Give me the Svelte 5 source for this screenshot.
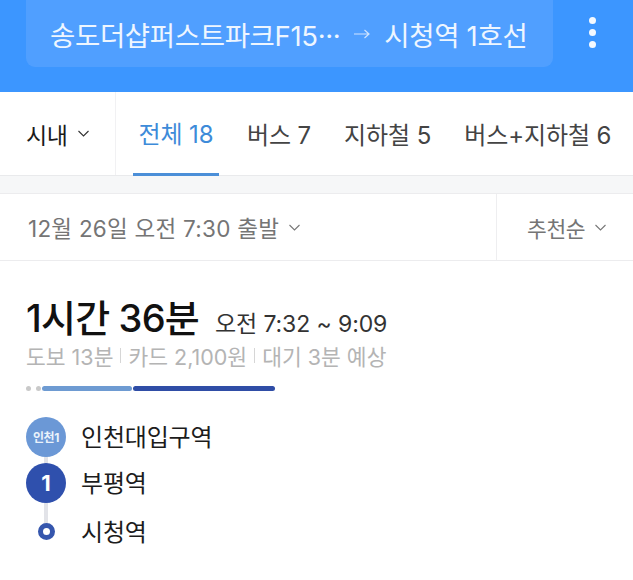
<script>
  const tabs = [
    { label: "전체 18", active: true },
    { label: "버스 7" },
    { label: "지하철 5" },
    { label: "버스+지하철 6" }
  ];
  const stops = [
    { name: "인천대입구역", badge: "인천1", kind: "line1" },
    { name: "부평역", badge: "1", kind: "line2" },
    { name: "시청역", badge: "", kind: "end" }
  ];
</script>

<div class="page">
  <header class="top">
    <div class="route">
      <span class="from">송도더샵퍼스트파크F15···</span>
      <svg class="arrow" width="18" height="12" viewBox="0 0 18 12"><path d="M1 6h15M11.5 2l4.5 4-4.5 4" fill="none" stroke="#cfe4ff" stroke-width="1.2"/></svg>
      <span>시청역 1호선</span>
    </div>
    <div class="more"><i></i><i></i><i></i></div>
  </header>

  <nav class="tabs">
    <div class="scope">
      <span>시내</span>
      <svg class="chev" width="13" height="7" viewBox="0 0 12 7"><path d="M1 1l5 5 5-5" fill="none" stroke="#333" stroke-width="1.1"/></svg>
    </div>
    <div class="tablist">
      {#each tabs as tab}
        <div class="tab" class:active={tab.active}>{tab.label}</div>
      {/each}
    </div>
  </nav>

  <div class="gap"></div>

  <div class="filter">
    <div class="when">
      <span>12월 26일 오전 7:30 출발</span>
      <svg class="chev" width="13" height="7" viewBox="0 0 12 7"><path d="M1 1l5 5 5-5" fill="none" stroke="#777" stroke-width="1.1"/></svg>
    </div>
    <div class="sort">
      <span>추천순</span>
      <svg class="chev" width="13" height="7" viewBox="0 0 12 7"><path d="M1 1l5 5 5-5" fill="none" stroke="#777" stroke-width="1.1"/></svg>
    </div>
  </div>

  <section class="result">
    <div class="headline">
      <h2>1시간 36분</h2>
      <span class="times">오전 7:32 ~ 9:09</span>
    </div>
    <div class="meta">
      <span>도보 13분</span><b></b><span>카드 2,100원</span><b></b><span>대기 3분 예상</span>
    </div>
    <div class="bar">
      <i class="dot"></i><i class="dot"></i>
      <i class="seg light"></i><i class="seg dark"></i>
    </div>
    <ul class="stops">
      {#each stops as stop}
        <li class={stop.kind}>
          <div class="mark"><span class="badge">{stop.badge}</span></div>
          <span class="name">{stop.name}</span>
        </li>
      {/each}
    </ul>
  </section>
</div>

<style>
  :global(body) {
    margin: 0;
    background: #fff;
  }
  .page {
    width: 633px;
    height: 580px;
    overflow: hidden;
    font-family: Inter, "Noto Sans CJK KR", sans-serif;
  }
  .top {
    height: 92px;
    background: #3c96ff;
    display: flex;
    align-items: flex-start;
    padding-left: 26px;
    box-sizing: border-box;
  }
  .route {
    width: 527px;
    height: 67px;
    box-sizing: border-box;
    padding: 0 0 0 24px;
    background: #509fff;
    border-radius: 0 0 9px 9px;
    display: flex;
    align-items: center;
    color: #eef6ff;
    font-size: 27.5px;
    letter-spacing: -0.35px;
    white-space: nowrap;
  }
  .from {
    margin-right: 13px;
  }
  .arrow {
    margin-right: 13px;
  }
  .more {
    margin-left: 36px;
    padding-top: 17px;
    display: flex;
    flex-direction: column;
    gap: 5px;
  }
  .more i {
    width: 7px;
    height: 7px;
    border-radius: 50%;
    background: #f4f9ff;
  }
  .tabs {
    height: 84px;
    box-sizing: border-box;
    display: flex;
    border-bottom: 1px solid #e9eaec;
  }
  .scope {
    width: 116px;
    flex: none;
    box-sizing: border-box;
    padding-left: 26px;
    display: flex;
    align-items: center;
    gap: 10px;
    border-right: 1px solid #f1f1f3;
    color: #1a1a1a;
    font-size: 23px;
    letter-spacing: -0.5px;
  }
  .tablist {
    display: flex;
    padding-left: 17px;
    gap: 33px;
  }
  .tab {
    height: 84px;
    box-sizing: border-box;
    padding-bottom: 1px;
    display: flex;
    align-items: center;
    font-size: 24px;
    letter-spacing: -0.1px;
    color: #444;
    white-space: nowrap;
  }
  .tab.active {
    width: 86px;
    margin-right: -5px;
    justify-content: center;
    color: #3d8bd9;
    border-bottom: 3px solid #4b8fd8;
  }
  .gap {
    height: 17px;
    background: #f6f7f8;
    border-bottom: 1px solid #ececee;
  }
  .filter {
    height: 66px;
    display: flex;
    border-bottom: 1px solid #ececee;
    color: #757575;
    font-size: 21.5px;
    letter-spacing: -0.4px;
  }
  .when {
    flex: 1;
    padding-left: 28px;
    display: flex;
    align-items: center;
    gap: 9px;
    font-size: 22.5px;
    letter-spacing: 0.25px;
  }
  .sort {
    width: 137px;
    box-sizing: border-box;
    padding-left: 30px;
    border-left: 1px solid #eeeef0;
    display: flex;
    align-items: center;
    gap: 9px;
  }
  .result {
    padding: 27px 0 0 26px;
  }
  .headline {
    display: flex;
    align-items: baseline;
    gap: 16px;
    height: 51px;
  }
  h2 {
    margin: 0;
    font-size: 38px;
    font-weight: 500;
    letter-spacing: -0.8px;
    color: #111;
  }
  .times {
    font-size: 23px;
    color: #333;
    letter-spacing: -0.1px;
  }
  .meta {
    display: flex;
    align-items: center;
    gap: 7px;
    height: 32px;
    font-size: 21.5px;
    color: #b4b4b4;
  }
  .meta b {
    width: 1px;
    height: 15px;
    background: #d6d6d6;
  }
  .bar {
    margin-top: 15px;
    display: flex;
    align-items: center;
    gap: 1px;
    height: 5px;
  }
  .dot {
    width: 5px;
    height: 5px;
    border-radius: 50%;
    background: #c9c9c9;
    margin-right: 4px;
  }
  .dot + .dot {
    margin-right: 0;
  }
  .seg {
    height: 5px;
    border-radius: 3px;
  }
  .light {
    width: 90px;
    background: #6e9bd2;
  }
  .dark {
    width: 142px;
    background: #2f4da6;
  }
  .stops {
    list-style: none;
    margin: 23px 0 0;
    padding: 0;
    position: relative;
  }
  .stops::before {
    content: "";
    position: absolute;
    left: 18px;
    top: 30px;
    width: 4px;
    height: 80px;
    background: #e2e3e8;
  }
  .stops li {
    display: flex;
    align-items: center;
    position: relative;
    font-size: 24px;
    letter-spacing: -0.2px;
    color: #1c1c1c;
  }
  .name {
    padding-bottom: 2px;
  }
  .line1 {
    height: 45px;
  }
  .line2 {
    height: 47px;
  }
  .end {
    height: 50px;
  }
  .mark {
    width: 40px;
    display: flex;
    justify-content: center;
    margin-right: 15px;
  }
  .badge {
    width: 40px;
    height: 40px;
    border-radius: 50%;
    display: flex;
    align-items: center;
    justify-content: center;
    color: #fff;
    font-weight: 700;
  }
  .line1 .badge {
    background: #6b98d6;
    font-size: 12px;
    letter-spacing: -0.4px;
    color: #eaf2fb;
  }
  .line2 .badge {
    background: #2f50ad;
    font-size: 22px;
  }
  .end .badge {
    width: 7px;
    height: 7px;
    background: #fff;
    border: 5px solid #3556ad;
  }
</style>
